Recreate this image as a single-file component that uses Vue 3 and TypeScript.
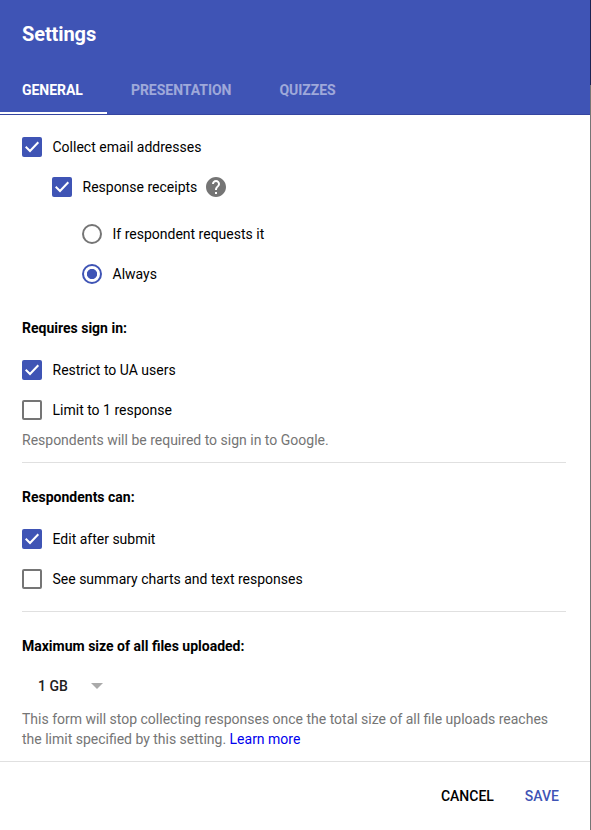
<script setup lang="ts">
import { ref } from 'vue'

const tabs = ['GENERAL', 'PRESENTATION', 'QUIZZES']
const activeTab = ref('GENERAL')

const collect = ref(true)
const receipts = ref(true)
const receiptMode = ref('always')
const restrict = ref(true)
const limit = ref(false)
const edit = ref(true)
const summary = ref(false)
</script>

<template>
  <div class="screen">
    <div class="dialog">
      <header class="header">
        <h1 class="title">Settings</h1>
        <nav class="tabs">
          <button
            v-for="tab in tabs"
            :key="tab"
            class="tab"
            :class="{ active: tab === activeTab }"
            @click="activeTab = tab"
          >
            {{ tab }}
          </button>
        </nav>
      </header>

      <main class="body">
        <section class="section first">
          <label class="row" @click="collect = !collect">
            <span class="box" :class="{ on: collect }">
              <svg v-if="collect" viewBox="0 0 20 20"><path d="M3.7 9.8 8 14 16.3 5.2" /></svg>
            </span>
            <span>Collect email addresses</span>
          </label>
          <label class="row indent-1" @click="receipts = !receipts">
            <span class="box" :class="{ on: receipts }">
              <svg v-if="receipts" viewBox="0 0 20 20"><path d="M3.7 9.8 8 14 16.3 5.2" /></svg>
            </span>
            <span>Response receipts</span>
            <svg class="help" viewBox="2 2 20 20">
              <path d="M12 2C6.48 2 2 6.48 2 12s4.480 10 10 10 10-4.480 10-10S17.520 2 12 2zm1 17h-2v-2h2v2zm2.070-7.750l-.9.920C13.450 12.900 13 13.500 13 15h-2v-.5c0-1.100.45-2.100 1.170-2.830l1.240-1.260c.37-.36.590-.86.590-1.410 0-1.100-.9-2-2-2s-2 .9-2 2H8c0-2.210 1.790-4 4-4s4 1.790 4 4c0 .88-.36 1.680-.93 2.250z" />
            </svg>
          </label>
          <div class="radios">
            <label class="row" @click="receiptMode = 'request'">
              <span class="radio" :class="{ on: receiptMode === 'request' }"></span>
              <span>If respondent requests it</span>
            </label>
            <label class="row" @click="receiptMode = 'always'">
              <span class="radio" :class="{ on: receiptMode === 'always' }"></span>
              <span>Always</span>
            </label>
          </div>
        </section>

        <section class="section signin">
          <h2 class="heading">Requires sign in:</h2>
          <label class="row" @click="restrict = !restrict">
            <span class="box" :class="{ on: restrict }">
              <svg v-if="restrict" viewBox="0 0 20 20"><path d="M3.7 9.8 8 14 16.3 5.2" /></svg>
            </span>
            <span>Restrict to UA users</span>
          </label>
          <label class="row" @click="limit = !limit">
            <span class="box" :class="{ on: limit }">
              <svg v-if="limit" viewBox="0 0 20 20"><path d="M3.7 9.8 8 14 16.3 5.2" /></svg>
            </span>
            <span>Limit to 1 response</span>
          </label>
          <p class="hint">Respondents will be required to sign in to Google.</p>
        </section>

        <section class="section respondents">
          <h2 class="heading">Respondents can:</h2>
          <label class="row" @click="edit = !edit">
            <span class="box" :class="{ on: edit }">
              <svg v-if="edit" viewBox="0 0 20 20"><path d="M3.7 9.8 8 14 16.3 5.2" /></svg>
            </span>
            <span>Edit after submit</span>
          </label>
          <label class="row" @click="summary = !summary">
            <span class="box" :class="{ on: summary }">
              <svg v-if="summary" viewBox="0 0 20 20"><path d="M3.7 9.8 8 14 16.3 5.2" /></svg>
            </span>
            <span>See summary charts and text responses</span>
          </label>
        </section>

        <section class="section upload">
          <h2 class="heading">Maximum size of all files uploaded:</h2>
          <div class="select">
            <span>1 GB</span>
            <span class="arrow"></span>
          </div>
          <p class="note">
            This form will stop collecting responses once the total size of all file uploads reaches<br />
            the limit specified by this setting. <a class="link">Learn more</a>
          </p>
        </section>
      </main>

      <footer class="footer">
        <button class="action">CANCEL</button>
        <button class="action primary">SAVE</button>
      </footer>
    </div>
    <div class="backdrop"></div>
  </div>
</template>

<style>
body {
  background: #fff;
}
</style>

<style scoped>
.screen {
  display: flex;
  width: 591px;
  height: 830px;
  overflow: hidden;
  font-family: Roboto, sans-serif;
  font-size: 14px;
  line-height: 20px;
  color: #000;
}

.dialog {
  display: flex;
  flex-direction: column;
  width: 590px;
  background: #fff;
}

.backdrop {
  width: 1px;
  background: linear-gradient(#1b2353 85px, #757575 85px);
}

.header {
  box-sizing: border-box;
  height: 115px;
  padding-top: 22px;
  background: #3f54b5;
  border-bottom: 1px solid #3545a0;
  color: #fff;
}

.title {
  margin: 0;
  padding-left: 22px;
  font-size: 20px;
  font-weight: 700;
  line-height: 24px;
  letter-spacing: -0.1px;
}

.tabs {
  display: flex;
  height: 68px;
}

.tab {
  box-sizing: border-box;
  height: 68px;
  padding: 22px 24px 0;
  border: 0;
  border-bottom: 2px solid transparent;
  background: none;
  font: 700 14px/20px Roboto, sans-serif;
  letter-spacing: -0.03px;
  color: rgba(255, 255, 255, 0.5);
}

.tab:first-child {
  padding-left: 22px;
}

.tab.active {
  color: #fff;
  border-bottom-color: #fff;
}

.body {
  flex: 1;
  padding: 22px 24px 0 22px;
}

.row {
  display: flex;
  align-items: center;
  height: 20px;
}

.row + .row {
  margin-top: 20px;
}

.indent-1 {
  padding-left: 30px;
}

.radios {
  margin-top: 27px;
  padding-left: 60px;
}

.box,
.radio {
  box-sizing: border-box;
  flex: none;
  width: 20px;
  height: 20px;
  margin-right: 10.5px;
  border: 2px solid #757575;
  border-radius: 2px;
}

.box.on {
  border: 0;
  background: #3f54b5;
}

.box svg {
  display: block;
  width: 20px;
  height: 20px;
}

.box path {
  fill: none;
  stroke: #fff;
  stroke-width: 2;
}

.radio {
  border-radius: 50%;
}

.radio.on {
  border-color: #3f54b5;
  background: radial-gradient(circle, #3f54b5 4.7px, transparent 5.5px);
}

.help {
  width: 20px;
  height: 20px;
  margin-left: 9px;
  fill: #757575;
}

.heading {
  margin: 0 0 22px;
  font-size: 14px;
  font-weight: 700;
  line-height: 20px;
}

.signin {
  margin-top: 34px;
  border-bottom: 1px solid #e0e0e0;
}

.hint {
  margin: 10px 0 12px;
  color: #757575;
}

.respondents {
  padding: 24px 0 22px;
  border-bottom: 1px solid #e0e0e0;
}

.upload {
  padding-top: 24px;
}

.upload .heading {
  margin-bottom: 20px;
}

.select {
  display: flex;
  align-items: center;
  gap: 23px;
  padding-left: 16px;
  font-weight: 500;
  color: #212121;
}

.arrow {
  width: 0;
  height: 0;
  border: 6px solid transparent;
  border-top-color: #aaa;
  border-bottom: 0;
}

.note {
  margin: 13px 0 0;
  color: #757575;
  white-space: nowrap;
  word-spacing: -0.04px;
}

.link {
  color: #0000ee;
}

.footer {
  box-sizing: border-box;
  display: flex;
  justify-content: flex-end;
  gap: 31px;
  height: 69px;
  padding: 24px 31px 0 0;
  border-top: 1px solid #e0e0e0;
}

.action {
  height: 20px;
  padding: 0;
  border: 0;
  background: none;
  font: 500 14px/20px Roboto, sans-serif;
  color: #000;
}

.action.primary {
  color: #3f54b5;
}
</style>
